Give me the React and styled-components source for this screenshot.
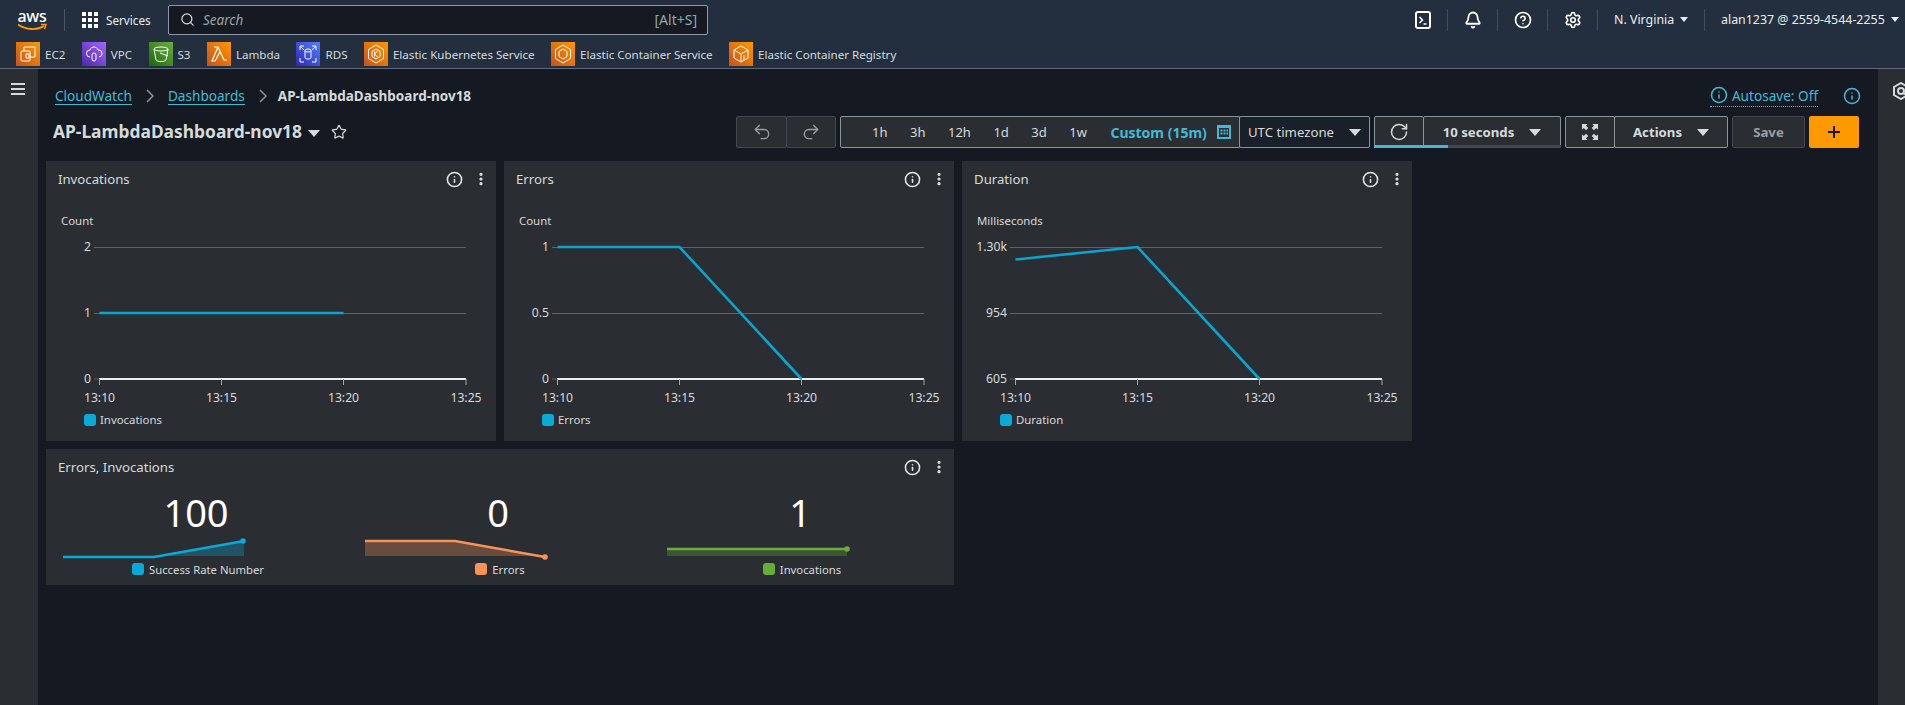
import React from "react"
import styled, { createGlobalStyle } from "styled-components"
import { Bell, CircleHelp, EllipsisVertical, Info, Redo2, RotateCw, Search, Settings, Star, Undo2 } from "lucide-react"

const GlobalStyle = createGlobalStyle`
  html, body {
    margin: 0;
    height: 100%;
    overflow: hidden;
    background: #151a22;
  }
  body {
    font-family: "Noto Sans", "Open Sans", Arial, sans-serif;
    color: #d5dbdb;
  }
  * { box-sizing: border-box; }
`

const Page = styled.div`
  width: 1905px;
  height: 705px;
  display: flex;
  flex-direction: column;
  overflow: hidden;
`

/* top nav */
const Header = styled.header`
  height: 69px;
  flex: none;
  background: #232f3e;
  border-bottom: 1px solid #5f6b7a;
`
const TopRow = styled.div`
  height: 39px;
  display: flex;
  align-items: center;
`
const Logo = styled.div`
  width: 30px;
  margin-left: 17px;
  height: 22px;
  position: relative;
  color: #fff;
  font: 500 16px/14px "Noto Sans", Arial, sans-serif;
  letter-spacing: -0.3px;
  text-align: center;
  svg { position: absolute; left: 0; bottom: 0; }
`
const Divider = styled.div`
  width: 1px;
  height: 22px;
  background: #4a5564;
  margin-left: 17px;
`
const ServicesBtn = styled.div`
  display: flex;
  align-items: center;
  gap: 8px;
  margin-left: 17px;
  width: 86px;
  font-size: 11.7px;
  color: #eaeded;
`
const SearchBox = styled.div`
  width: 540px;
  height: 30px;
  display: flex;
  align-items: center;
  padding: 0 10px 0 11px;
  background: #151a22;
  border: 1px solid #8d99a8;
  border-radius: 2px;
  color: #d5dbdb;
`
const SearchText = styled.span`
  margin-left: 8px;
  font-size: 13.5px;
  font-style: italic;
  color: #95a5a6;
`
const ShortcutHint = styled.span`
  margin-left: auto;
  font-size: 14px;
  color: #95a5a6;
`
const Utilities = styled.div`
  margin-left: auto;
  display: flex;
  align-items: center;
  height: 22px;
  color: #fff;
`
const UtilIcon = styled.div`
  width: 50px;
  height: 22px;
  display: flex;
  align-items: center;
  justify-content: center;
  border-left: 1px solid ${p => (p.$first ? "transparent" : "#414d5c")};
`
const UtilMenu = styled.div`
  height: 22px;
  width: ${p => p.$width}px;
  padding-left: 16px;
  display: flex;
  align-items: center;
  gap: 6px;
  font-size: 12.4px;
  color: #eaeded;
  border-left: 1px solid #414d5c;
`
const Caret = styled.span`
  width: 0;
  height: 0;
  flex: none;
  border-left: ${p => p.$size || 4}px solid transparent;
  border-right: ${p => p.$size || 4}px solid transparent;
  border-top: ${p => (p.$size || 4) + 1}px solid ${p => p.$color || "#eaeded"};
`
const FavRow = styled.div`
  height: 29px;
  display: flex;
  align-items: flex-start;
  padding: 3px 0 0 16px;
  gap: 16.4px;
`
const Fav = styled.div`
  display: flex;
  align-items: center;
  gap: 5px;
  height: 24px;
  font-size: 11.6px;
  color: #d5dbdb;
  white-space: nowrap;
`
const Tile = styled.div`
  width: 24px;
  height: 24px;
  flex: none;
  display: flex;
  align-items: center;
  justify-content: center;
  background: linear-gradient(45deg, ${p => p.$from}, ${p => p.$to});
`

/* body */
const Body = styled.div`
  flex: 1;
  display: flex;
  min-height: 0;
`
const LeftRail = styled.aside`
  width: 38px;
  flex: none;
  background: #2a2e33;
  padding: 14px 0 0 11px;
`
const Burger = styled.div`
  width: 14px;
  height: 12px;
  border-top: 2px solid #d5dbdb;
  border-bottom: 2px solid #d5dbdb;
  position: relative;
  &::after {
    content: "";
    position: absolute;
    left: 0;
    right: 0;
    top: 3px;
    height: 2px;
    background: #d5dbdb;
  }
`
const RightRail = styled.aside`
  width: 27px;
  flex: none;
  background: #2a2e33;
  padding: 13px 0 0 14px;
  overflow: hidden;
  color: #d5dbdb;
`
const Content = styled.main`
  flex: 1;
  min-width: 0;
`
const CrumbRow = styled.div`
  height: 47px;
  padding: 16px 17px 9px 17px;
  display: flex;
  align-items: center;
  font-size: 13.6px;
`
const CrumbLink = styled.a`
  color: #44b9d6;
  line-height: 17px;
  border-bottom: 1px solid #44b9d6;
`
const CrumbSep = styled.svg`
  width: 8px;
  height: 14px;
  margin: 0 14px;
  flex: none;
`
const CrumbCurrent = styled.span`
  margin-left: -3px;
  font-weight: 700;
  font-size: 13.5px;
  color: #d5dbdb;
`
const Autosave = styled.div`
  margin-left: auto;
  display: flex;
  align-items: center;
  gap: 4px;
  padding-bottom: 1px;
  border-bottom: 1px dotted #44b9d6;
  color: #44b9d6;
  font-size: 13.6px;
  line-height: 19px;
`
const InfoLink = styled.div`
  margin-left: 25px;
  display: flex;
  color: #44b9d6;
`
const TitleRow = styled.div`
  height: 32px;
  margin-bottom: 13px;
  padding: 0 19px 0 15px;
  display: flex;
  align-items: center;
`
const Title = styled.h1`
  margin: 0 0 2px;
  font-size: 17.4px;
  font-weight: 700;
  color: #d5dbdb;
  white-space: nowrap;
`
const TitleCaret = styled.span`
  margin: 2px 0 0 6px;
  display: flex;
`
const TitleStar = styled.span`
  margin-left: 11px;
  display: flex;
  color: #d5dbdb;
`
const Controls = styled.div`
  margin-left: auto;
  display: flex;
  height: 32px;
  gap: 4px;
`
const Group = styled.div`
  display: flex;
  height: 32px;
`
const CtlButton = styled.div`
  position: relative;
  width: ${p => p.$width}px;
  height: 32px;
  display: flex;
  align-items: center;
  justify-content: center;
  gap: 15px;
  background: ${p => p.$bg || "#2a2e33"};
  border: 1px solid ${p => (p.$dim ? "#414750" : "#879596")};
  margin-left: ${p => (p.$joined ? "-1px" : "0")};
  border-radius: 2px;
  font-size: 13.2px;
  font-weight: ${p => (p.$bold ? 700 : 400)};
  color: ${p => (p.$dim ? "#95a1a2" : "#d5dbdb")};
  white-space: nowrap;
`
const TimeRange = styled.div`
  width: 400px;
  height: 32px;
  display: flex;
  align-items: center;
  gap: 22.5px;
  padding-left: 31px;
  background: #2a2e33;
  border: 1px solid #879596;
  border-radius: 2px 0 0 2px;
  font-size: 13px;
  color: #d5dbdb;
`
const CustomRange = styled.span`
  display: flex;
  align-items: center;
  gap: 10px;
  margin-left: 1px;
  color: #44b9d6;
  font-size: 14px;
  font-weight: 700;
`
const Progress = styled.div`
  position: absolute;
  left: -1px;
  right: -1px;
  bottom: -1px;
  height: 3px;
  background: #414750;
  &::after {
    content: "";
    display: block;
    height: 3px;
    width: ${p => p.$fill};
    background: #44b9d6;
  }
`
const PlusButton = styled.div`
  width: 50px;
  height: 32px;
  display: flex;
  align-items: center;
  justify-content: center;
  background: #ff9900;
  border-radius: 2px;
  color: #16191f;
`

/* widgets */
const Grid = styled.div`
  display: grid;
  grid-template-columns: repeat(3, 450px);
  gap: 8px;
  padding-left: 8px;
`
const Card = styled.section`
  background: #2a2e33;
  height: ${p => p.$height}px;
  grid-column: span ${p => p.$span || 1};
`
const CardHead = styled.div`
  height: 36px;
  padding: 0 7px 0 12px;
  display: flex;
  align-items: center;
  font-size: 13.2px;
  color: #d5dbdb;
`
const CardActions = styled.div`
  margin-left: auto;
  display: flex;
  align-items: center;
  gap: 10px;
  color: #e3e6e8;
`
const ChartSvg = styled.svg`
  display: block;
  width: 450px;
  height: 244px;
`
const ChartLabel = styled.text`
  fill: #d5dbdb;
  font-size: 11.4px;
  font-family: "Noto Sans", sans-serif;
`
const TickLabel = styled.text`
  fill: #d5dbdb;
  font-size: 12.2px;
  font-family: "Noto Sans", sans-serif;
`
const Metrics = styled.div`
  display: grid;
  grid-template-columns: repeat(3, 302px);
  padding-left: 1px;
`
const Metric = styled.div`
  display: flex;
  flex-direction: column;
`
const MetricValue = styled.div`
  height: 46px;
  margin-top: 4px;
  padding-right: 4px;
  font-size: 38px;
  line-height: 46px;
  text-align: center;
  color: #fff;
`
const Spark = styled.svg`
  display: block;
  width: 190px;
  height: 22px;
  margin: 4px 0 0 16px;
  overflow: visible;
`
const MetricLegend = styled.div`
  height: 18px;
  margin-top: -1px;
  display: flex;
  align-items: center;
  justify-content: center;
  gap: 5px;
  font-size: 11.3px;
  color: #d5dbdb;
`
const Swatch = styled.span`
  width: 12px;
  height: 12px;
  border-radius: 3px;
  background: ${p => p.$color};
`

const AwsLogo = () => (
  <Logo>
    aws
    <svg width="30" height="8" viewBox="0 0 30 8" fill="none">
      <path d="M1 1.5C9 7 20 7.5 27 3" stroke="#ff9900" strokeWidth="1.8" />
      <path d="M24 1.5L29 1.5L27.5 6" stroke="#ff9900" strokeWidth="1.5" />
    </svg>
  </Logo>
)

const GridIcon = () => (
  <svg width="16" height="16" viewBox="0 0 16 16" fill="#fff">
    {[0, 6, 12].map(y => [0, 6, 12].map(x => <rect key={`${x}-${y}`} x={x} y={y} width="4" height="4" />))}
  </svg>
)

const Glyph = ({ children }) => (
  <svg width="20" height="20" viewBox="0 0 20 20" fill="none" stroke="#fff" strokeWidth="1">
    {children}
  </svg>
)

const favourites = [
  { name: "EC2", from: "#c8511b", to: "#ff9900", glyph: <><rect x="3" y="7" width="9" height="10" rx="1" /><path d="M6 7V3h11v10h-5M8 10h3v4H8z" /></> },
  { name: "VPC", from: "#4d27a8", to: "#a166ff", glyph: <><path d="M6 13a3.5 3.5 0 0 1 0-7c1-4 7-4 8 0a3.5 3.5 0 0 1 1 7" /><rect x="8" y="9" width="4" height="8" rx="2" /></> },
  { name: "S3", from: "#1b660f", to: "#6cae3e", glyph: <><ellipse cx="10" cy="5" rx="7" ry="2" /><path d="M3 5l2 11c1 2 9 2 10 0l2-11M9 9l8 3" /></> },
  { name: "Lambda", from: "#c8511b", to: "#ff9900", glyph: <path d="M5 3h4l6 13h3M9 3l-6 14h3l5-9" strokeWidth="1.2" /> },
  { name: "RDS", from: "#2e27ad", to: "#527fff", glyph: <><ellipse cx="10" cy="6.5" rx="3" ry="1.5" /><path d="M7 6.5v7c0 2 6 2 6 0v-7M2 6V2h4M18 6V2h-4M2 14v4h4M18 14v4h-4M3 3l3 3M17 3l-3 3" /></> },
  { name: "Elastic Kubernetes Service", from: "#c8511b", to: "#ff9900", glyph: <><path d="M10 1l7.5 4.5v9L10 19l-7.5-4.5v-9z" /><path d="M10 5l4 2.5v5L10 15l-4-2.5v-5zM8.5 7.5v5M11.5 7l-3 3 3 3" /></> },
  { name: "Elastic Container Service", from: "#c8511b", to: "#ff9900", glyph: <><path d="M10 1l7.5 4.5v9L10 19l-7.5-4.5v-9z" /><path d="M10 5l4 2.5v5L10 15l-4-2.5v-5z" /></> },
  { name: "Elastic Container Registry", from: "#c8511b", to: "#ff9900", glyph: <><path d="M10 2l7 4v8l-7 4-7-4V6z" /><path d="M3 6l7 4 7-4M10 10v8M13 11v5" /></> },
]

const charts = [
  {
    title: "Invocations",
    unit: "Count",
    yLabels: ["2", "1", "0"],
    points: "53.5,116 297.5,116",
  },
  {
    title: "Errors",
    unit: "Count",
    yLabels: ["1", "0.5", "0"],
    points: "53.5,50 175.5,50 297.5,182",
  },
  {
    title: "Duration",
    unit: "Milliseconds",
    yLabels: ["1.30k", "954", "605"],
    points: "53.5,62.5 175.5,50 297.5,182",
  },
]

const metrics = [
  { value: "100", label: "Success Rate Number", color: "#09aad8", line: "0,18 91,18 181,2", fill: "91,17 181,2 181,17", dot: [180, 2] },
  { value: "0", label: "Errors", color: "#f89256", line: "0,2 90,2 180,18", fill: "0,2 90,2 180,17 0,17", dot: [180, 18] },
  { value: "1", label: "Invocations", color: "#69ae34", line: "0,10 180,10", fill: "0,10 180,10 180,17 0,17", dot: [180, 10] },
]

const CardHeader = ({ title }) => (
  <CardHead>
    {title}
    <CardActions>
      <Info size={17} strokeWidth={2.2} />
      <EllipsisVertical size={16} strokeWidth={2.8} />
    </CardActions>
  </CardHead>
)

const gridY = [50, 116, 182]
const tickX = [53.5, 175.5, 297.5, 420]
const tickNames = ["13:10", "13:15", "13:20", "13:25"]

const LineChart = ({ title, unit, yLabels, points }) => (
  <Card $height={280}>
    <CardHeader title={title} />
    <ChartSvg viewBox="0 0 450 244">
      <ChartLabel x="15" y="28">{unit}</ChartLabel>
      {gridY.map((y, i) => (
        <g key={y}>
          <TickLabel x="45" y={y + 4} textAnchor="end">{yLabels[i]}</TickLabel>
          {i < 2 && <line x1="48" x2="420" y1={y + 0.5} y2={y + 0.5} stroke="#5f6368" />}
        </g>
      ))}
      <line x1="48" x2="420" y1="182" y2="182" stroke="#5f6368" />
      <line x1="53" x2="420" y1="182" y2="182" stroke="#eaeded" strokeWidth="2" />
      {tickX.map((x, i) => (
        <g key={x}>
          <line x1={x} x2={x} y1="182" y2="188" stroke="#a0a4a8" />
          <TickLabel x={x} y="205" textAnchor="middle">{tickNames[i]}</TickLabel>
        </g>
      ))}
      <polyline points={points} fill="none" stroke="#09a5cf" strokeWidth="2.6" />
      <rect x="38" y="217" width="12" height="12" rx="3" fill="#09aad8" />
      <ChartLabel x="54" y="227">{title}</ChartLabel>
    </ChartSvg>
  </Card>
)

const SparkLine = ({ color, line, fill, dot }) => (
  <Spark viewBox="0 0 190 22">
    <polygon points={fill} fill={color} fillOpacity="0.3" />
    <polyline points={line} fill="none" stroke={color} strokeWidth="2.4" />
    <circle cx={dot[0]} cy={dot[1]} r="2.8" fill={color} />
  </Spark>
)

const App = () => (
  <Page>
    <GlobalStyle />
    <Header>
      <TopRow>
        <AwsLogo />
        <Divider />
        <ServicesBtn>
          <GridIcon />
          Services
        </ServicesBtn>
        <SearchBox>
          <Search size={15} strokeWidth={2} />
          <SearchText>Search</SearchText>
          <ShortcutHint>[Alt+S]</ShortcutHint>
        </SearchBox>
        <Utilities>
          <UtilIcon $first>
            <svg width="16" height="18" viewBox="0 0 16 18" fill="none" stroke="#fff" strokeWidth="2">
              <rect x="1" y="1" width="14" height="16" rx="2" />
              <path d="M4.5 6l3 3-3 3M8.5 13h3" strokeWidth="1.5" />
            </svg>
          </UtilIcon>
          <UtilIcon><Bell size={18} strokeWidth={2.4} /></UtilIcon>
          <UtilIcon><CircleHelp size={18} strokeWidth={2.2} /></UtilIcon>
          <UtilIcon><Settings size={18} strokeWidth={2.2} /></UtilIcon>
          <UtilMenu $width={107}>N. Virginia <Caret /></UtilMenu>
          <UtilMenu $width={201}>alan1237 @ 2559-4544-2255 <Caret /></UtilMenu>
        </Utilities>
      </TopRow>
      <FavRow>
        {favourites.map(f => (
          <Fav key={f.name}>
            <Tile $from={f.from} $to={f.to}><Glyph>{f.glyph}</Glyph></Tile>
            {f.name}
          </Fav>
        ))}
      </FavRow>
    </Header>
    <Body>
      <LeftRail><Burger /></LeftRail>
      <Content>
        <CrumbRow>
          <CrumbLink>CloudWatch</CrumbLink>
          <CrumbSep viewBox="0 0 8 14" fill="none" stroke="#879596" strokeWidth="1.5"><path d="M1 1l6 6-6 6" /></CrumbSep>
          <CrumbLink>Dashboards</CrumbLink>
          <CrumbSep viewBox="0 0 8 14" fill="none" stroke="#879596" strokeWidth="1.5"><path d="M1 1l6 6-6 6" /></CrumbSep>
          <CrumbCurrent>AP-LambdaDashboard-nov18</CrumbCurrent>
          <Autosave><Info size={18} strokeWidth={2} />Autosave: Off</Autosave>
          <InfoLink><Info size={18} strokeWidth={2} /></InfoLink>
        </CrumbRow>
        <TitleRow>
          <Title>AP-LambdaDashboard-nov18</Title>
          <TitleCaret><Caret $size={6} $color="#d5dbdb" /></TitleCaret>
          <TitleStar><Star size={16} strokeWidth={1.8} /></TitleStar>
          <Controls>
            <Group>
              <CtlButton $width={51} $dim><Undo2 size={20} strokeWidth={1.6} /></CtlButton>
              <CtlButton $width={50} $dim $joined><Redo2 size={20} strokeWidth={1.6} /></CtlButton>
            </Group>
            <Group>
              <TimeRange>
                <span>1h</span>
                <span>3h</span>
                <span>12h</span>
                <span>1d</span>
                <span>3d</span>
                <span>1w</span>
                <CustomRange>
                  Custom (15m)
                  <svg width="14" height="14" viewBox="0 0 14 14" fill="#44b9d6">
                    <path fillRule="evenodd" d="M0 0h14v14H0zM2 3v9h10V3z" />
                    <rect x="3.5" y="4.5" width="2" height="2" />
                    <rect x="6.5" y="4.5" width="2" height="2" />
                    <rect x="9.5" y="4.5" width="1.5" height="2" />
                    <rect x="3.5" y="7.5" width="2" height="2" />
                    <rect x="6.5" y="7.5" width="2" height="2" />
                    <rect x="9.5" y="7.5" width="1.5" height="2" />
                  </svg>
                </CustomRange>
              </TimeRange>
              <CtlButton $width={131} $bg="#1a202a" $joined>
                UTC timezone <Caret $size={6} $color="#d5dbdb" />
              </CtlButton>
            </Group>
            <Group>
              <CtlButton $width={50}>
                <RotateCw size={20} strokeWidth={1.8} />
                <Progress $fill="100%" />
              </CtlButton>
              <CtlButton $width={138} $joined $bold>
                10 seconds <Caret $size={6} $color="#d5dbdb" />
                <Progress $fill="18%" />
              </CtlButton>
            </Group>
            <Group>
              <CtlButton $width={50}>
                <svg width="16" height="16" viewBox="0 0 14 14" fill="#d5dbdb">
                  <path d="M0 0h5L3.5 1.5 5.5 3.5 3.5 5.5 1.5 3.5 0 5zM14 0v5L12.5 3.5 10.5 5.5 8.5 3.5 10.5 1.5 9 0zM0 14V9l1.5 1.5 2-2 2 2-2 2L5 14zM14 14H9l1.5-1.5-2-2 2-2 2 2L14 9z" />
                </svg>
              </CtlButton>
              <CtlButton $width={114} $joined $bold>
                Actions <Caret $size={6} $color="#d5dbdb" />
              </CtlButton>
            </Group>
            <CtlButton $width={73} $dim $bold>Save</CtlButton>
            <PlusButton>
              <svg width="14" height="14" viewBox="0 0 14 14" stroke="#16191f" strokeWidth="2">
                <path d="M7 1v12M1 7h12" />
              </svg>
            </PlusButton>
          </Controls>
        </TitleRow>
        <Grid>
          {charts.map(c => <LineChart key={c.title} {...c} />)}
          <Card $height={136} $span={2}>
            <CardHeader title="Errors, Invocations" />
            <Metrics>
              {metrics.map(m => (
                <Metric key={m.label}>
                  <MetricValue>{m.value}</MetricValue>
                  <SparkLine color={m.color} line={m.line} fill={m.fill} dot={m.dot} />
                  <MetricLegend><Swatch $color={m.color} />{m.label}</MetricLegend>
                </Metric>
              ))}
            </Metrics>
          </Card>
        </Grid>
      </Content>
      <RightRail>
        <svg width="18" height="18" viewBox="0 0 18 18" fill="none" stroke="#d5dbdb" strokeWidth="2">
          <path d="M9 1l7 4v8l-7 4-7-4V5z" />
          <circle cx="9" cy="9" r="3" />
          <path d="M11 11l5 3" />
        </svg>
      </RightRail>
    </Body>
  </Page>
)

export default App
